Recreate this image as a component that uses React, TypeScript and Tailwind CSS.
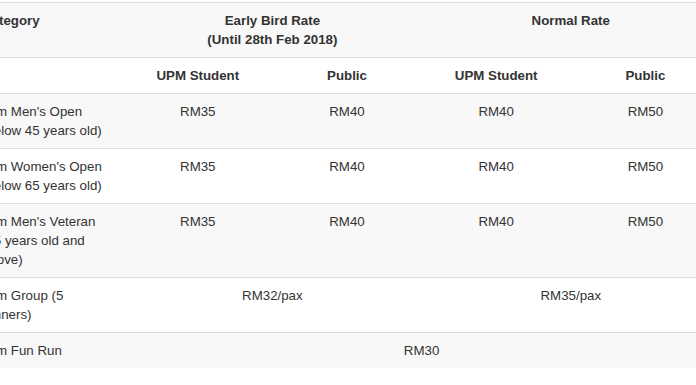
const prices = [
  { category: ["5km Men's Open", "(below 45 years old)"], cells: ["RM35", "RM40", "RM40", "RM50"] },
  { category: ["5km Women's Open", "(below 65 years old)"], cells: ["RM35", "RM40", "RM40", "RM50"] },
  { category: ["5km Men's Veteran", "(45 years old and", "above)"], cells: ["RM35", "RM40", "RM40", "RM50"] },
];

function Category({ lines }: { lines: string[] }) {
  return (
    <td className="whitespace-nowrap px-2 py-2 text-left align-top">
      {lines.map((line, i) => (
        <div key={i}>{line}</div>
      ))}
    </td>
  );
}

export default function App() {
  return (
    <div className="h-[385px] w-[696px] overflow-hidden bg-white pt-[2px] font-['Liberation_Sans',Arial,sans-serif] text-[13.3px] leading-[19px] text-[#333]">
      <table className="ml-[-26px] w-[746px] table-fixed border-collapse">
        <thead>
          <tr className="border-t border-[#dddddd] bg-[#f8f8f8] font-bold">
            <th className="px-2 py-2 text-left align-top">Category</th>
            <th colSpan={2} className="px-2 py-2 text-center align-top">
              Early Bird Rate
              <br />
              (Until 28th Feb 2018)
            </th>
            <th colSpan={2} className="px-2 py-2 text-center align-top">
              Normal Rate
            </th>
          </tr>
          <tr className="border-t border-[#dddddd] bg-white font-bold">
            <th className="px-2 py-2" />
            <th className="px-2 py-2 text-center">UPM Student</th>
            <th className="px-2 py-2 text-center">Public</th>
            <th className="px-2 py-2 text-center">UPM Student</th>
            <th className="px-2 py-2 text-center">Public</th>
          </tr>
        </thead>
        <tbody>
          {prices.map((row, i) => (
            <tr key={i} className={`border-t border-[#dddddd] ${i % 2 === 0 ? "bg-[#f8f8f8]" : "bg-white"}`}>
              <Category lines={row.category} />
              {row.cells.map((cell, j) => (
                <td key={j} className="px-2 py-2 text-center align-top">
                  {cell}
                </td>
              ))}
            </tr>
          ))}
          <tr className="border-t border-[#dddddd] bg-white">
            <Category lines={["5km Group (5", "runners)"]} />
            <td colSpan={2} className="px-2 py-2 text-center align-top">RM32/pax</td>
            <td colSpan={2} className="px-2 py-2 text-center align-top">RM35/pax</td>
          </tr>
          <tr className="border-t border-[#dddddd] bg-[#f8f8f8]">
            <Category lines={["5km Fun Run"]} />
            <td colSpan={4} className="px-2 py-2 text-center align-top">RM30</td>
          </tr>
        </tbody>
      </table>
    </div>
  );
}
